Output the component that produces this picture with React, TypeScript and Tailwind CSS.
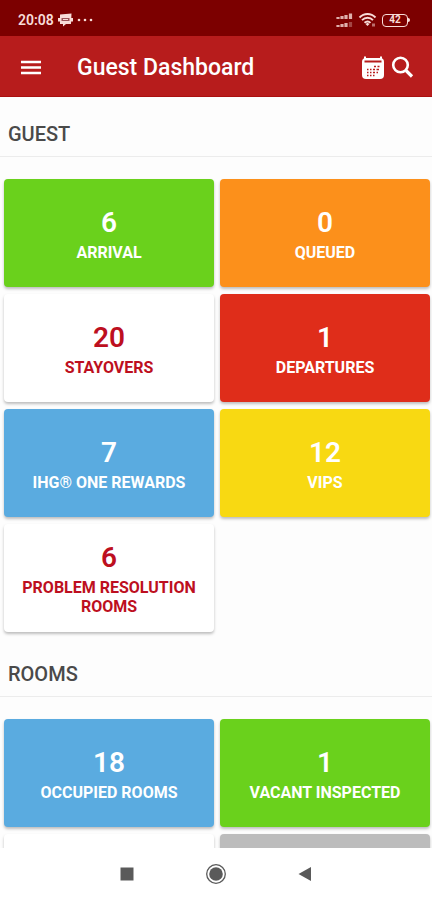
import React from "react";

type Tile = { id: string; value?: number; label?: string; style: string };

const guestTiles: Tile[] = [
  { id: "arrival", value: 6, label: "ARRIVAL", style: "bg-[#6ad11c] text-white" },
  { id: "queued", value: 0, label: "QUEUED", style: "bg-[#fc901b] text-white" },
  { id: "stayovers", value: 20, label: "STAYOVERS", style: "bg-white text-[#bd0f20]" },
  { id: "departures", value: 1, label: "DEPARTURES", style: "bg-[#df2d1a] text-white" },
  { id: "rewards", value: 7, label: "IHG® ONE REWARDS", style: "bg-[#5aabe0] text-white" },
  { id: "vips", value: 12, label: "VIPS", style: "bg-[#f8d912] text-white" },
  { id: "problems", value: 6, label: "PROBLEM RESOLUTION ROOMS", style: "bg-white text-[#bd0f20]" },
];

const roomTiles: Tile[] = [
  { id: "occupied", value: 18, label: "OCCUPIED ROOMS", style: "bg-[#5aabe0] text-white" },
  { id: "inspected", value: 1, label: "VACANT INSPECTED", style: "bg-[#6ad11c] text-white" },
  { id: "next-left", style: "bg-white text-[#bd0f20]" },
  { id: "next-right", style: "bg-[#bcbcbc] text-white" },
];

function StatusBar() {
  return (
    <div className="flex h-9 shrink-0 items-center justify-between bg-[#7c0000] pt-1 pr-[22px] pl-[18px] text-[#f8dcd8]">
      <div className="flex items-center gap-1">
        <span className="text-sm font-semibold">20:08</span>
        <svg width="15" height="14" viewBox="0 0 15 14" aria-hidden="true">
          <path d="M2 1.5 13.5.5 13 11H8l-3 2.5V11H2Z" fill="currentColor" />
          <path d="M0 5h15v3.500H0Z" fill="currentColor" />
          <path d="M3.500 5h8v3h-8Z" fill="#9b5358" />
          <path d="M5 6.500h5" stroke="currentColor" />
        </svg>
        <svg width="16" height="4" viewBox="0 0 16 4" fill="currentColor" aria-hidden="true">
          <circle cx="2" cy="2" r="1.300" />
          <circle cx="8" cy="2" r="1.300" />
          <circle cx="14" cy="2" r="1.300" />
        </svg>
      </div>
      <div className="flex items-center gap-1">
        <svg width="19" height="15" viewBox="0 0 19 15" fill="none" stroke="currentColor" strokeWidth="3.200" opacity=".8" aria-hidden="true">
          <path d="M3 6V4M7 6V3M11 6V2M15.500 6V.500M3 14v-2M7 14v-3M11 14v-4" />
          <path d="M15.500 14V9" opacity=".4" />
        </svg>
        <svg width="20" height="16" viewBox="0 0 20 16" fill="none" stroke="currentColor" strokeWidth="1.900" aria-hidden="true">
          <path d="M1.500 5.500C6 .8 13 .8 17.500 5.500M4 8.200c3.200-3.200 8-3.200 11 0M6.500 10.800c1.900-1.700 4.300-1.700 6 0" />
          <path d="m7.500 12 2-1.300 2 1.300-2 2Z" fill="currentColor" stroke="none" />
          <path d="M14 13h3" strokeWidth="3" opacity=".5" />
        </svg>
        <div className="flex items-center">
          <span className="flex h-[13px] w-[26px] items-center justify-center rounded border border-current text-[10px] leading-none font-bold">42</span>
          <span className="h-1 w-0.5 rounded-r bg-current" />
        </div>
      </div>
    </div>
  );
}

function AppBar() {
  return (
    <header className="flex h-[61px] shrink-0 items-center border-b border-[#aa1010] bg-[#b71c1c] pt-1 pr-[18px] pl-5 text-white">
      <button type="button" aria-label="Menu" className="mr-[35px]">
        <svg width="22" height="16" viewBox="0 0 22 16" stroke="currentColor" strokeWidth="2.300" aria-hidden="true">
          <path d="M1 2h20M1 7.500h20M1 13h20" />
        </svg>
      </button>
      <h1 className="flex-1 text-[23px] leading-8 font-medium">Guest Dashboard</h1>
      <button type="button" aria-label="Calendar" className="mr-1.5">
        <svg width="24" height="24" viewBox="0 0 24 24" aria-hidden="true">
          <rect x="1" y="2" width="22" height="21" rx="4" fill="currentColor" />
          <path d="M4 .5v4M20 .5v4" stroke="currentColor" strokeWidth="2" />
          <path d="M3.500 5.500h17" stroke="#b71c1c" strokeWidth="2" />
          <path d="M13 10.500h2m1.500 0h2M6 13.500h1.500m1.500 0h1.500m1.500 0h2m1.500 0h2.500M6 16.500h1.500m1.500 0h1.500m1.500 0h2m1.500 0h1.500M6 19.500h1.500m1.500 0h1.500m1.500 0h1.500" stroke="#b71c1c" strokeWidth="1.300" />
        </svg>
      </button>
      <button type="button" aria-label="Search">
        <svg width="23" height="24" viewBox="0 0 23 24" fill="none" stroke="currentColor" aria-hidden="true">
          <circle cx="9.500" cy="9" r="7.300" strokeWidth="2.600" />
          <path d="m15 14.500 6 6" strokeWidth="3.200" />
        </svg>
      </button>
    </header>
  );
}

function Section({ title, tiles }: { title: string; tiles: Tile[] }) {
  return (
    <section className="pb-[5px]">
      <h2 className="flex h-[60px] items-center border-b border-[#ececec] px-2 pt-3.5 text-xl font-medium text-[#4a4a4a]">{title}</h2>
      <div className="grid auto-rows-[108px] grid-cols-2 gap-x-1.5 gap-y-[7px] pt-[22px] pr-0.5 pl-1">
        {tiles.map((tile) => (
          <button
            key={tile.id}
            type="button"
            className={`flex flex-col items-center justify-center rounded px-3 pb-0.5 shadow-[0_2px_3px_rgba(0,0,0,0.25)] ${tile.style}`}
          >
            {tile.label && (
              <>
                <span className="text-[28px] leading-10 font-semibold">{tile.value}</span>
                <span className="text-base leading-[19px] font-bold">{tile.label}</span>
              </>
            )}
          </button>
        ))}
      </div>
    </section>
  );
}

function NavigationBar() {
  return (
    <nav className="flex h-[52px] shrink-0 items-center justify-center gap-[71px] bg-white text-[#5a5a5a]">
      <button type="button" aria-label="Recent apps">
        <svg width="14" height="14" viewBox="0 0 14 14" aria-hidden="true">
          <path d="M.5.5h13v13H.5Z" fill="currentColor" />
        </svg>
      </button>
      <button type="button" aria-label="Home">
        <svg width="22" height="22" viewBox="0 0 22 22" aria-hidden="true">
          <circle cx="11" cy="11" r="9.300" fill="none" stroke="currentColor" strokeWidth="1.300" />
          <circle cx="11" cy="11" r="6.800" fill="currentColor" />
        </svg>
      </button>
      <button type="button" aria-label="Back">
        <svg width="14" height="16" viewBox="0 0 14 16" aria-hidden="true">
          <path d="M.5 8 13 1v14Z" fill="currentColor" />
        </svg>
      </button>
    </nav>
  );
}

export default function App() {
  return (
    <div className="flex h-screen flex-col overflow-hidden bg-[#fdfdfd] font-[Roboto,sans-serif]">
      <StatusBar />
      <AppBar />
      <main className="min-h-0 flex-1 overflow-hidden">
        <Section title="GUEST" tiles={guestTiles} />
        <Section title="ROOMS" tiles={roomTiles} />
      </main>
      <NavigationBar />
    </div>
  );
}
